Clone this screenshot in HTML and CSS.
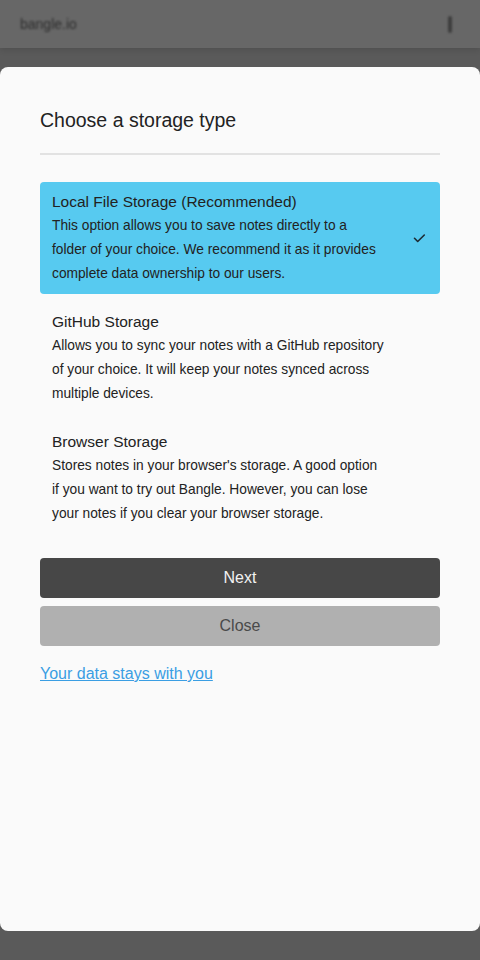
FILE: index.html
```html
<!DOCTYPE html>
<html>
<head>
<meta charset="utf-8">
<link rel="stylesheet" href="styles.css">
</head>
<body>
<div class="page">
  <header class="topbar">
    <span class="brand">bangle.io</span>
    <span class="kebab"></span>
  </header>
</div>
<div class="modal">
  <h1 class="title">Choose a storage type</h1>
  <hr class="divider">
  <ul class="options">
    <li class="option selected">
      <div class="opt-text">
        <div class="opt-title">Local File Storage (Recommended)</div>
        <div class="opt-desc">This option allows you to save notes directly to a folder of your choice. We recommend it as it provides complete data ownership to our users.</div>
      </div>
      <svg class="check" width="24" height="24" viewBox="0 0 24 24"><path d="M10.5 12.3l3.2 3.2L20.3 9" fill="none" stroke="#1d2b33" stroke-width="1.6" stroke-linecap="round" stroke-linejoin="round"/></svg>
    </li>
    <li class="option">
      <div class="opt-text">
        <div class="opt-title">GitHub Storage</div>
        <div class="opt-desc">Allows you to sync your notes with a GitHub repository of your choice. It will keep your notes synced across multiple devices.</div>
      </div>
    </li>
    <li class="option">
      <div class="opt-text">
        <div class="opt-title">Browser Storage</div>
        <div class="opt-desc">Stores notes in your browser's storage. A good option if you want to try out Bangle. However, you can lose your notes if you clear your browser storage.</div>
      </div>
    </li>
  </ul>
  <div class="actions">
    <button class="btn btn-primary">Next</button>
    <button class="btn btn-secondary">Close</button>
  </div>
  <a class="link" href="#">Your data stays with you</a>
</div>
</body>
</html>
```

FILE: styles.css
```css
* { box-sizing: border-box; }
html, body { margin: 0; padding: 0; }
body {
  width: 480px;
  height: 960px;
  overflow: hidden;
  background: #5a5a5a;
  font-family: "Liberation Sans", Arial, sans-serif;
  color: #222;
}
.page { height: 960px; }
.topbar {
  height: 48px;
  background: #676767;
  display: flex;
  align-items: center;
  justify-content: space-between;
  padding: 0 28px 0 20px;
  box-shadow: 0 2px 6px rgba(0,0,0,0.12);
}
.brand {
  font-size: 14px;
  color: #2e2e2e;
  filter: blur(1.2px);
}
.kebab {
  width: 4px;
  height: 17px;
  background: #3e3e3e;
  border-radius: 2px;
  filter: blur(1px);
}
.modal {
  position: fixed;
  top: 67px;
  left: 0;
  width: 480px;
  height: 864px;
  background: #fafafa;
  border-radius: 8px;
  padding: 40px 40px;
}
.title {
  margin: 0;
  font-size: 19.5px;
  font-weight: normal;
  line-height: 26px;
  color: #222;
}
.divider {
  border: none;
  height: 2px;
  background: #e2e2e2;
  margin: 20px 0 27px;
}
.options {
  list-style: none;
  margin: 0;
  padding: 0;
  display: flex;
  flex-direction: column;
  gap: 8px;
}
.option {
  display: flex;
  align-items: center;
  justify-content: space-between;
  padding: 8px 12px;
  border-radius: 4px;
}
.option.selected { background: #57caf0; }
.opt-text { flex: none; width: 333px; }
.opt-title {
  font-size: 15.5px;
  line-height: 24px;
  color: #222;
}
.opt-desc {
  font-size: 13.75px;
  line-height: 24px;
  color: #222;
}
.check { width: 24px; height: 24px; flex: none; }
.actions {
  margin-top: 24px;
  display: flex;
  flex-direction: column;
  gap: 8px;
}
.btn {
  height: 40px;
  border: none;
  border-radius: 4px;
  font-family: inherit;
  font-size: 16px;
}
.btn-primary { background: #474747; color: #f2f2f2; }
.btn-secondary { background: #b0b0b0; color: #4a4a4a; }
.link {
  display: inline-block;
  margin-top: 18px;
  font-size: 16px;
  line-height: 20px;
  color: #3a9ee3;
}
```
